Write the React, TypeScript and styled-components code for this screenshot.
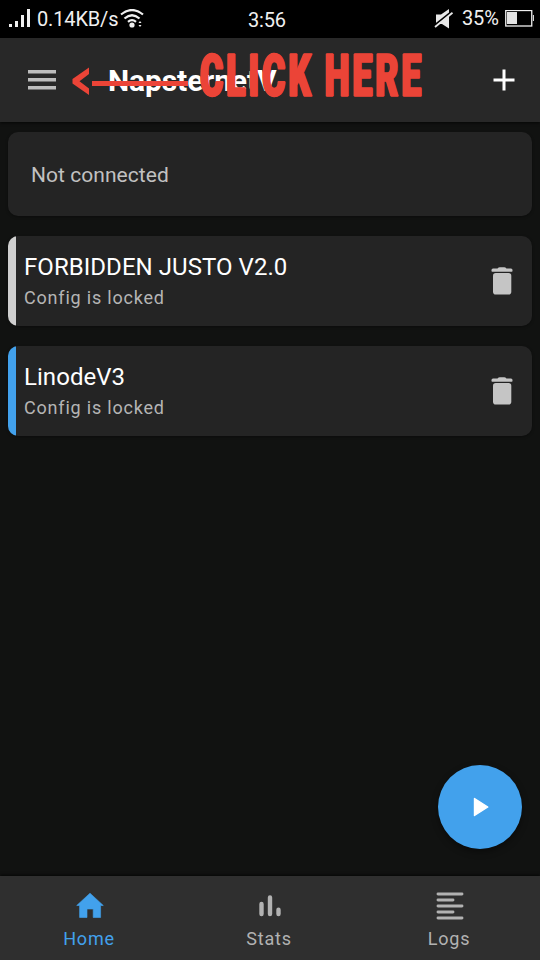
import React from "react";
import styled, { createGlobalStyle } from "styled-components";

const GlobalStyle = createGlobalStyle`
  * { box-sizing: border-box; }
  body { margin: 0; background: #111211; font-family: Roboto, "Liberation Sans", sans-serif; }
`;

const Screen = styled.div`
  display: flex;
  flex-direction: column;
  width: 540px;
  height: 960px;
  overflow: hidden;
  background: #111211;
  position: relative;
`;

const StatusBar = styled.div`
  display: grid;
  grid-template-columns: 1fr auto 1fr;
  align-items: center;
  flex: none;
  height: 38px;
  padding: 0 6px 0 8px;
  background: #000;
  color: #f0f0f0;
  font-size: 20px;
  line-height: 34px;
`;

const StatusGroup = styled.div<{ $end?: boolean }>`
  display: flex;
  align-items: center;
  height: 38px;
  justify-content: ${(p) => (p.$end ? "flex-end" : "flex-start")};
  svg { flex: none; }
`;

const StatusText = styled.span<{ $width: number; $indent?: number; $drop?: number }>`
  width: ${(p) => p.$width}px;
  height: 38px;
  padding: ${(p) => p.$drop ?? 1}px 0 0 ${(p) => p.$indent ?? 0}px;
  white-space: nowrap;
  letter-spacing: -0.15px;
`;

const Header = styled.header`
  display: flex;
  align-items: center;
  flex: none;
  height: 84px;
  padding: 0 18px 0 24px;
  background: #282828;
  box-shadow: 0 1px 3px rgba(0, 0, 0, 0.7);
  position: relative;
`;

const IconButton = styled.button`
  display: flex;
  align-items: center;
  justify-content: center;
  flex: none;
  width: 36px;
  height: 36px;
  padding: 0;
  border: 0;
  background: none;
`;

const Title = styled.h1`
  flex: 1;
  margin: 0;
  padding: 2px 0 0 48px;
  color: #fff;
  font-size: 30px;
  font-weight: 700;
  line-height: 36px;
  letter-spacing: -0.1px;
`;

const Callout = styled.div`
  position: absolute;
  left: 70px;
  top: 0;
  display: flex;
  color: #eb4437;
  pointer-events: none;
`;

const CalloutText = styled.span`
  display: block;
  width: 222px;
  height: 80px;
  margin-left: 12px;
  padding-top: 2px;
  font-size: 59px;
  font-weight: 900;
  line-height: 71px;
  white-space: nowrap;
  letter-spacing: 5px;
  word-spacing: -2px;
  -webkit-text-stroke: 1.6px #eb4437;
  text-shadow: -1.5px 0 #eb4437, 1.5px 0 #eb4437;
  transform: scaleX(0.6);
  transform-origin: 0 0;
`;

const Content = styled.main`
  display: flex;
  flex-direction: column;
  flex: 1;
  gap: 20px;
  padding: 10px 8px;
`;

const Card = styled.section`
  display: flex;
  align-items: center;
  border-radius: 10px;
  overflow: hidden;
  background: #242424;
  box-shadow: 0 1px 3px rgba(0, 0, 0, 0.35);
`;

const ConnectionCard = styled(Card)`
  height: 84px;
  padding: 2px 23px 0;
  color: #c1c1c1;
  font-size: 21px;
  letter-spacing: 0.05px;
`;

const ConfigCard = styled(Card)`
  height: 90px;
  padding-right: 12px;
`;

const Accent = styled.div<{ $color: string }>`
  align-self: stretch;
  width: 8px;
  background: ${(p) => p.$color};
`;

const ConfigText = styled.div`
  flex: 1;
  padding: 2px 0 0 8px;
`;

const ConfigName = styled.div`
  color: #fff;
  font-size: 24px;
  line-height: 32px;
  letter-spacing: 0.05px;
`;

const ConfigNote = styled.div`
  color: #b5b5b5;
  font-size: 18px;
  line-height: 30px;
  letter-spacing: 0.8px;
`;

const StartButton = styled.button`
  position: absolute;
  right: 18px;
  bottom: 111px;
  display: flex;
  align-items: center;
  justify-content: center;
  width: 84px;
  height: 84px;
  padding: 0;
  border: 0;
  border-radius: 50%;
  background: #42a1ec;
  box-shadow: 0 3px 7px rgba(0, 0, 0, 0.4);
`;

const BottomNav = styled.nav`
  display: grid;
  grid-template-columns: repeat(3, 1fr);
  flex: none;
  height: 84px;
  background: #2f2f2f;
  box-shadow: 0 -1px 3px rgba(0, 0, 0, 0.7);
`;

const NavItem = styled.a<{ $active?: boolean }>`
  display: flex;
  flex-direction: column;
  align-items: center;
  padding: 14px 2px 0 0;
  color: ${(p) => (p.$active ? "#42a1ec" : "#b2b2b2")};
  font-size: 18px;
  line-height: 24px;
  letter-spacing: 0.8px;
  svg { flex: none; margin: 0 0 5px 2px; }
`;

const SignalIcon = () => (
  <svg width="24" height="20" viewBox="0 0 24 20" fill="#f0f0f0">
    <path d="M1 15h3v3H1zM7 12h3v6H7zM13 6h3v12h-3zM19 0h3v18h-3z" />
  </svg>
);

const WifiIcon = () => (
  <svg width="24" height="20" viewBox="0 0 24 20" fill="none" stroke="#f0f0f0" strokeWidth="2.2">
    <path d="M1 5.500Q12 -3.500 23 5.500M4.500 9.500Q12 3 19.500 9.500M8 12.800Q12 9.300 16 12.800" />
    <circle cx="12" cy="16" r="2.6" fill="#f0f0f0" stroke="none" />
    <path d="M18.500 14l1.500-2 1.500 2zM18.500 16h3l-1.500 2z" fill="#f0f0f0" stroke="none" />
  </svg>
);

const MuteIcon = () => (
  <svg width="20" height="20" viewBox="0 0 20 20">
    <path d="M2 5.500h5L15 0v19.500L8 15H2z" fill="#e8e8e8" />
    <path d="M1.500 15.500L18.500 2" stroke="#000" strokeWidth="2" />
    <path d="M1 18L18.500 3.800" stroke="#e8e8e8" strokeWidth="1.8" />
  </svg>
);

const BatteryIcon = () => (
  <svg width="29" height="18" viewBox="0 0 29 18">
    <rect x=".75" y=".5" width="26" height="15.500" fill="none" stroke="#f0f0f0" strokeWidth="1.3" />
    <path d="M2 2h10v12H2z" fill="#e4e4e4" />
    <path d="M28.400 5v6" stroke="#f0f0f0" strokeWidth="1" />
  </svg>
);

const MenuIcon = () => (
  <svg width="28" height="20" viewBox="0 0 28 20" fill="#bdbdbd">
    <path d="M0 0h28v3.500H0zM0 8h28v3.500H0zM0 16h28v3.500H0z" />
  </svg>
);

const PlusIcon = () => (
  <svg width="22" height="22" viewBox="0 0 22 22" stroke="#fff" strokeWidth="3">
    <path d="M.5 11h21M11 .5v21" />
  </svg>
);

const ArrowIcon = () => (
  <svg width="118" height="84" viewBox="0 0 118 84" fill="#eb4437">
    <path d="M19 29.500V36L9.500 43.200 19 50.500V57L2.500 45.500V41z" />
    <path d="M22 43h97v5H22z" />
  </svg>
);

const TrashIcon = () => (
  <svg width="22" height="28" viewBox="0 0 22 28" fill="#c5c5c5">
    <path d="M.5 4V3Q.5 1.500 2 1.500H6.500Q7.500.300 8.800.300H13.200Q14.500.300 15.500 1.500H20Q21.500 1.500 21.500 3V4Q21.500 4.700 20.800 4.700H1.200Q.5 4.700.5 4z" />
    <rect x="2" y="6" width="18.300" height="21.500" rx="2.800" />
  </svg>
);

const PlayIcon = () => (
  <svg width="18" height="22" viewBox="0 0 18 22">
    <path d="M3.500 2.500L16.800 11L3.500 19.500z" fill="#fff" stroke="#fff" strokeWidth="1.4" strokeLinejoin="round" />
  </svg>
);

const HomeIcon = () => (
  <svg width="32" height="32" viewBox="0 0 32 32" fill="currentColor">
    <path d="M16 3.200L29.300 15.500H26.600V27.500H19.200V19H13V27.500H5.600V15.500H2.700z" stroke="currentColor" strokeWidth=".6" strokeLinejoin="round" />
  </svg>
);

const StatsIcon = () => (
  <svg width="32" height="32" viewBox="0 0 32 32" stroke="currentColor" strokeWidth="4.400" strokeLinecap="round">
    <path d="M7.500 14v10M16 7.500V24M24.500 19.800V24" />
  </svg>
);

const LogsIcon = () => (
  <svg width="32" height="32" viewBox="0 0 32 32" stroke="currentColor" strokeWidth="2.900" strokeLinecap="round">
    <path d="M4 4h24M4 10h15M4 16h24M4 22h15M4 28h24" />
  </svg>
);

const configs = [
  { name: "FORBIDDEN JUSTO V2.0", accent: "#cfcfcf" },
  { name: "LinodeV3", accent: "#42a1ec" },
];

export default function App() {
  return (
    <>
      <GlobalStyle />
      <Screen>
        <StatusBar>
          <StatusGroup>
            <SignalIcon />
            <StatusText $width={88} $indent={5} $drop={2}>0.14KB/s</StatusText>
            <WifiIcon />
          </StatusGroup>
          <StatusText $width={46} $drop={3}>3:56</StatusText>
          <StatusGroup $end>
            <MuteIcon />
            <StatusText $width={51} $indent={8}>35%</StatusText>
            <BatteryIcon />
          </StatusGroup>
        </StatusBar>
        <Header>
          <IconButton aria-label="Menu"><MenuIcon /></IconButton>
          <Title>NapsternetV</Title>
          <IconButton aria-label="Add"><PlusIcon /></IconButton>
          <Callout>
            <ArrowIcon />
            <CalloutText>CLICK HERE</CalloutText>
          </Callout>
        </Header>
        <Content>
          <ConnectionCard>Not connected</ConnectionCard>
          {configs.map((c) => (
            <ConfigCard key={c.name}>
              <Accent $color={c.accent} />
              <ConfigText>
                <ConfigName>{c.name}</ConfigName>
                <ConfigNote>Config is locked</ConfigNote>
              </ConfigText>
              <IconButton aria-label="Delete"><TrashIcon /></IconButton>
            </ConfigCard>
          ))}
        </Content>
        <BottomNav>
          <NavItem $active><HomeIcon />Home</NavItem>
          <NavItem><StatsIcon />Stats</NavItem>
          <NavItem><LogsIcon />Logs</NavItem>
        </BottomNav>
        <StartButton aria-label="Start"><PlayIcon /></StartButton>
      </Screen>
    </>
  );
}
